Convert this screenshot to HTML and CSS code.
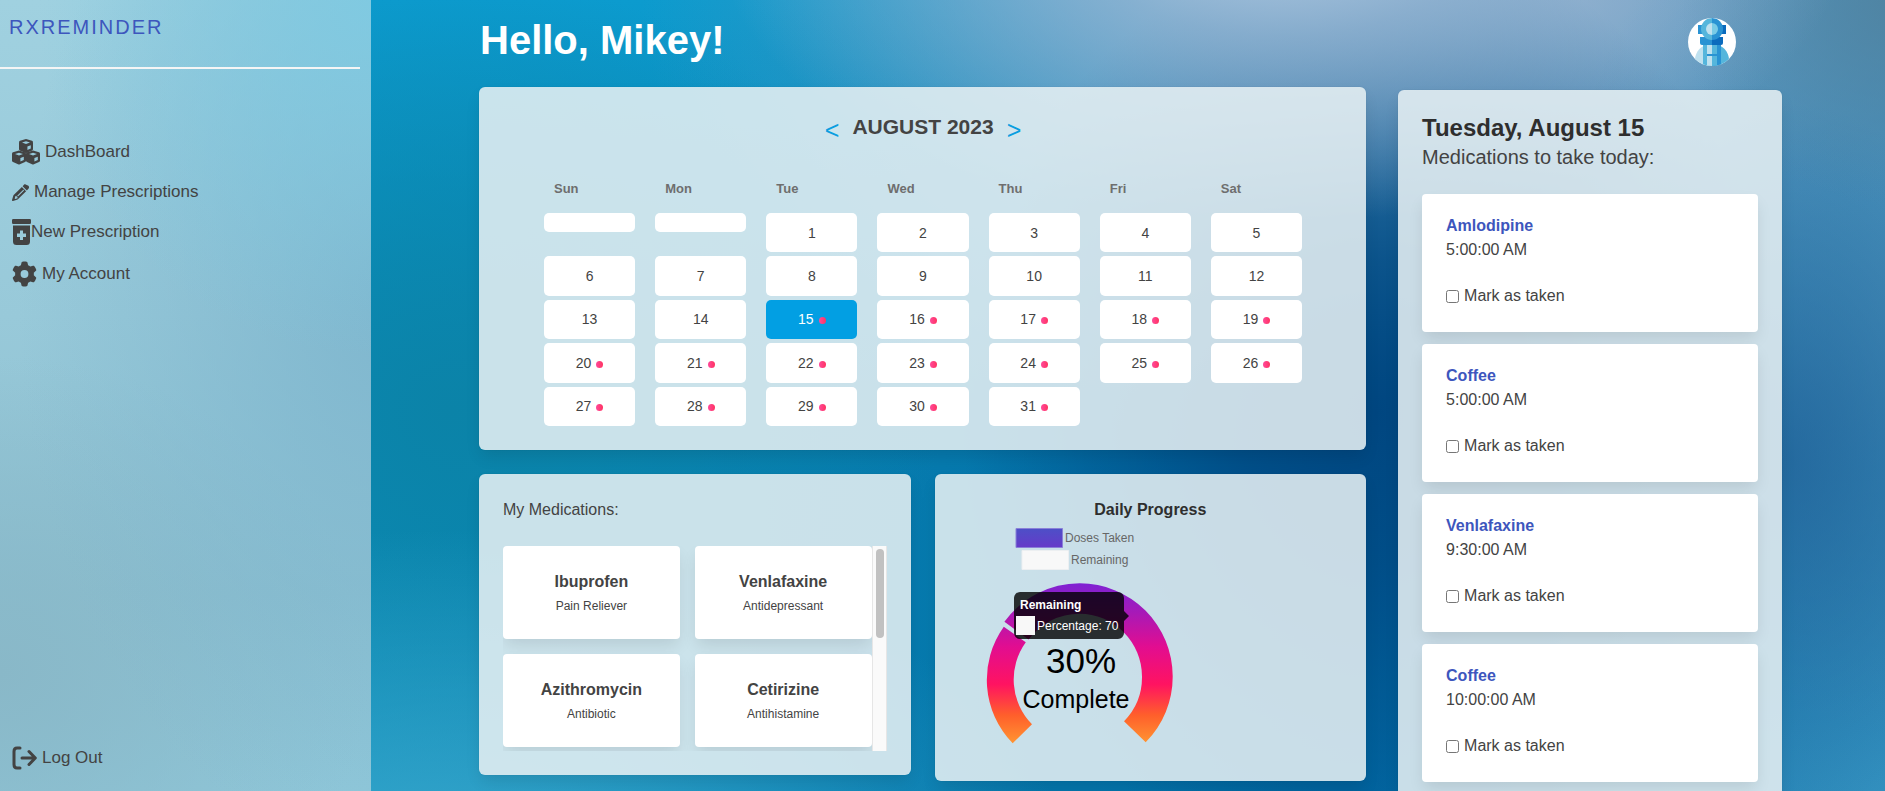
FILE: index.html
```html
<!DOCTYPE html>
<html lang="en">
<head>
<meta charset="utf-8">
<title>RxReminder</title>
<link rel="stylesheet" href="styles.css">
</head>
<body>
<div class="app">
  <aside class="sidebar">
    <a class="brand" href="#">RXREMINDER</a>
    <hr class="divider">
    <nav class="menu">
      <a class="menu-link gap-md" href="#">
        <svg width="28" height="26" viewBox="0 0 28 26" aria-hidden="true">
          <g id="cube"><path fill="#434343" d="M14 0 L20 1.8 Q21 2.2 21 3.4 V10 Q21 11 20 11.5 L14.9 13.8 Q14 14.2 13.1 13.8 L8 11.5 Q7 11 7 10 V3.4 Q7 2.2 8 1.8Z"/><path class="cube-face" d="M10 3.6 L14 2.2 18 3.6 14 5.1Z M15.4 7.6 L18.8 6.2 V9.4 L15.4 11Z"/></g>
          <use href="#cube" x="-7" y="11.5"/><use href="#cube" x="7" y="11.5"/>
        </svg>DashBoard</a>
      <a class="menu-link gap-md" href="#">
        <svg width="17" height="17" viewBox="0 0 512 512" aria-hidden="true"><path fill="#434343" d="M410 18c-12-12-32-12-44 0l-46 46 128 128 46-46c25-25 25-65 0-90zM297 87L58 326c-11 11-18 24-22 38L1 482c-3 8 0 17 6 23s15 8 23 6l118-35c14-4 27-12 38-22l239-239zM137 367h0l8 0v23c0 9 7 16 16 16h23c-3 11-9 22-19 26l-70 21-14-14 21-70c4-10 14-17 26-18l9 16zM354 201L186 369c-6 6-16 6-22 0s-6-16 0-22l168-168c6-6 16-6 22 0s6 16 0 22z" fill-rule="evenodd"/></svg>Manage Prescriptions</a>
      <a class="menu-link" href="#">
        <svg width="19" height="26" viewBox="0 0 19 26" aria-hidden="true"><path fill="#434343" fill-rule="evenodd" d="M1.3 0h16.4Q19 0 19 1.3v2.4Q19 5 17.7 5H1.3Q0 5 0 3.700V1.300Q0 0 1.300 0zM1 6.500h17V22.500Q18 26 14.500 26H4.500Q1 26 1 22.500zM8 11.500v3H5v3.500h3v3h3v-3h3v-3.500h-3v-3z"/></svg>New Prescription</a>
      <a class="menu-link gap-md" href="#">
        <svg width="25" height="28" viewBox="0 0 512 512" aria-hidden="true"><path fill="#434343" d="M495.900 166.600c3.200 8.700 .5 18.400-6.400 24.600l-43.300 39.400c1.100 8.300 1.700 16.800 1.700 25.400s-.6 17.100-1.700 25.400l43.300 39.400c6.900 6.200 9.600 15.900 6.400 24.600c-4.400 11.900-9.700 23.300-15.800 34.300l-4.700 8.100c-6.600 11-14 21.400-22.100 31.200c-5.900 7.200-15.700 9.600-24.500 6.800l-55.700-17.700c-13.400 10.300-28.200 18.900-44 25.400l-12.500 57.100c-2 9.100-9 16.300-18.200 17.800c-13.800 2.300-28 3.500-42.500 3.500s-28.700-1.200-42.500-3.500c-9.200-1.500-16.200-8.700-18.200-17.800l-12.500-57.100c-15.800-6.500-30.600-15.100-44-25.400L83.100 425.900c-8.800 2.800-18.600 .3-24.500-6.800c-8.100-9.800-15.500-20.200-22.100-31.200l-4.700-8.100c-6.100-11-11.400-22.400-15.800-34.300c-3.200-8.700-.5-18.400 6.400-24.600l43.300-39.400C64.600 273.100 64 264.600 64 256s.6-17.100 1.700-25.400L22.400 191.200c-6.900-6.200-9.600-15.900-6.400-24.600c4.400-11.900 9.700-23.300 15.800-34.300l4.700-8.100c6.600-11 14-21.400 22.100-31.200c5.900-7.200 15.700-9.600 24.500-6.800l55.700 17.700c13.400-10.300 28.200-18.900 44-25.400l12.500-57.100c2-9.100 9-16.300 18.200-17.800C227.300 1.200 241.500 0 256 0s28.700 1.200 42.500 3.500c9.200 1.500 16.200 8.700 18.200 17.800l12.500 57.100c15.800 6.500 30.600 15.100 44 25.400l55.700-17.700c8.800-2.800 18.600-.3 24.500 6.800c8.100 9.800 15.500 20.200 22.100 31.200l4.700 8.100c6.100 11 11.400 22.400 15.800 34.300zM256 336a80 80 0 1 0 0-160 80 80 0 1 0 0 160z"/></svg>My Account</a>
    </nav>
    <a class="menu-link gap-md logout" href="#">
      <svg width="25" height="24" viewBox="0 0 25 24" fill="none" stroke="#434343" stroke-width="3" stroke-linecap="round" stroke-linejoin="round" aria-hidden="true"><path d="M8 2H5Q2 2 2 5.500V18.500Q2 22 5 22H8M10 12H23M17 5.500L23.300 12 17 18.500"/></svg>Log Out</a>
  </aside>

  <main class="main">
    <header class="header">
      <h1 class="greeting">Hello, Mikey!</h1>
      <svg class="avatar" width="48" height="48" viewBox="0 0 48 48" role="img" aria-label="Profile">
        <clipPath id="round"><circle cx="24" cy="24" r="24"/></clipPath>
        <g clip-path="url(#round)">
          <path fill="#fff" d="M0 0h48v48H0z"/>
          <path fill="#bfe1ef" d="M24 26C13 26 7 34 7 42v6h17z"/><path fill="#55b6dc" d="M24 26c11 0 17 8 17 16v6H24z"/>
          <path fill="#2a93d3" d="M10 7h8v9h-8z"/><path fill="#0b6bbd" d="M30 7h8v9h-8z"/>
          <path fill="#55b6dc" d="M15 27h9v21h-9z"/><path fill="#2a93d3" d="M24 27h9v21h-9z"/>
          <path fill="#bfe1ef" d="M19 27h5v21h-5z"/><path fill="#55b6dc" d="M24 27h5v21h-5z"/>
          <path fill="#2a93d3" d="M19 36h10v2H19z"/>
          <path fill="#2a93d3" d="M12 19h12v8H14q-2 0-2-2z"/><path fill="#0b6bbd" d="M24 19h11v6q0 2-2 2h-9z"/>
          <path fill="#55b6dc" d="M24 0a11 11 0 0 0 0 22z"/><path fill="#2a93d3" d="M24 0a11 11 0 0 1 0 22z"/>
          <path fill="#bfe1ef" d="M24 5a6 6 0 0 0 0 12z"/><path fill="#79cbe6" d="M24 5a6 6 0 0 1 0 12z"/>
        </g>
      </svg>
    </header>

    <div class="board">
      <div class="left">
        <section class="card calendar">
          <div class="month">
            <button class="arrow" type="button" aria-label="Previous month">&lt;</button>
            <h2 class="month-name">AUGUST 2023</h2>
            <button class="arrow" type="button" aria-label="Next month">&gt;</button>
          </div>
          <table class="days">
            <thead><tr><th>Sun</th><th>Mon</th><th>Tue</th><th>Wed</th><th>Thu</th><th>Fri</th><th>Sat</th></tr></thead>
            <tbody>
              <tr><td class="blank"><div class="stub"></div></td><td class="blank"><div class="stub"></div></td><td>1</td><td>2</td><td>3</td><td>4</td><td>5</td></tr>
              <tr><td>6</td><td>7</td><td>8</td><td>9</td><td>10</td><td>11</td><td>12</td></tr>
              <tr><td>13</td><td>14</td><td class="today">15<i class="dot"></i></td><td>16<i class="dot"></i></td><td>17<i class="dot"></i></td><td>18<i class="dot"></i></td><td>19<i class="dot"></i></td></tr>
              <tr><td>20<i class="dot"></i></td><td>21<i class="dot"></i></td><td>22<i class="dot"></i></td><td>23<i class="dot"></i></td><td>24<i class="dot"></i></td><td>25<i class="dot"></i></td><td>26<i class="dot"></i></td></tr>
              <tr><td>27<i class="dot"></i></td><td>28<i class="dot"></i></td><td>29<i class="dot"></i></td><td>30<i class="dot"></i></td><td>31<i class="dot"></i></td></tr>
            </tbody>
          </table>
        </section>

        <div class="lower">
          <section class="card">
            <h2 class="card-title">My Medications:</h2>
            <div class="scroller">
              <ul class="meds">
                <li class="med"><strong>Ibuprofen</strong><span class="kind">Pain Reliever</span></li>
                <li class="med"><strong>Venlafaxine</strong><span class="kind">Antidepressant</span></li>
                <li class="med"><strong>Azithromycin</strong><span class="kind">Antibiotic</span></li>
                <li class="med"><strong>Cetirizine</strong><span class="kind">Antihistamine</span></li>
              </ul>
              <div class="track"><div class="thumb"></div></div>
            </div>
          </section>

          <section class="card progress">
            <h2 class="card-title progress-title">Daily Progress</h2>
            <svg class="chart" width="236" height="231" viewBox="959 526 236 231" role="img" aria-label="30% Complete">
              <defs>
                <linearGradient id="ring" gradientUnits="userSpaceOnUse" x1="0" y1="526" x2="0" y2="746">
                  <stop offset="0" stop-color="#4a52c7"/><stop offset=".1" stop-color="#663ac9"/><stop offset=".26" stop-color="#7f22d3"/><stop offset=".39" stop-color="#a61ab8"/><stop offset=".55" stop-color="#e20d90"/><stop offset=".72" stop-color="#ff1361"/><stop offset=".86" stop-color="#ff5f2b"/><stop offset="1" stop-color="#ff9a33"/>
                </linearGradient>
              </defs>
              <path fill="url(#ring)" stroke="#8a80d8" d="M1016 528.500h46.500v19H1016z"/>
              <path fill="#f8f8f8" stroke="#eceff1" d="M1022 550.500h46.500v19H1022z"/>
              <text class="legend" x="1065" y="542">Doses Taken</text>
              <text class="legend" x="1071" y="564">Remaining</text>
              <path fill="url(#ring)" d="M1012.700 743.300A91 91 0 0 1 1003.800 626.800L1025.800 642.300A63.500 63.500 0 0 0 1032 724.200Z"/>
              <path fill="url(#ring)" d="M1004.400 621.800A93 93 0 0 1 1079.700 583.300A93 93 0 0 1 1172.700 676.300A93 93 0 0 1 1145.700 742.300L1124 721.200A63 63 0 0 0 1142 676.500A63 63 0 0 0 1079.500 613.700A63 63 0 0 0 1028.600 639.500Z"/>
              <text class="percent" x="1081" y="673">30%</text>
              <text class="complete" x="1076" y="708">Complete</text>
              <path fill="#000" fill-opacity=".8" d="M1020 592h98a6 6 0 0 1 6 6v13l5 5-5 5v12a6 6 0 0 1-6 6h-98a6 6 0 0 1-6-6V598a6 6 0 0 1 6-6z"/>
              <text class="tip tip-title" x="1020" y="609">Remaining</text>
              <path fill="#f8f8f8" d="M1016 616h19v19h-19z"/>
              <text class="tip" x="1037" y="630">Percentage: 70</text>
            </svg>
          </section>
        </div>
      </div>

      <section class="card today-card">
        <h2 class="date">Tuesday, August 15</h2>
        <p class="subtitle">Medications to take today:</p>
        <ul class="doses">
          <li class="dose"><strong class="drug">Amlodipine</strong><span>5:00:00 AM</span><label class="mark"><input type="checkbox" class="tick">Mark as taken</label></li>
          <li class="dose"><strong class="drug">Coffee</strong><span>5:00:00 AM</span><label class="mark"><input type="checkbox" class="tick">Mark as taken</label></li>
          <li class="dose"><strong class="drug">Venlafaxine</strong><span>9:30:00 AM</span><label class="mark"><input type="checkbox" class="tick">Mark as taken</label></li>
          <li class="dose"><strong class="drug">Coffee</strong><span>10:00:00 AM</span><label class="mark"><input type="checkbox" class="tick">Mark as taken</label></li>
        </ul>
      </section>
    </div>
  </main>
</div>
</body>
</html>
```
FILE: styles.css
```css
* { box-sizing: border-box; margin: 0; padding: 0; }

body {
  font-family: "Liberation Sans", Helvetica, Arial, sans-serif;
  font-size: 16px;
  line-height: 24px;
  color: #434343;
}

ul { list-style: none; }
a { color: inherit; text-decoration: none; }

.app {
  display: flex;
  height: 100vh;
  overflow: hidden;
  background:
    radial-gradient(ellipse 30% 36% at 68% -8%, #b0c8e0 0%, rgba(160, 188, 216, .7) 35%, rgba(130, 165, 200, 0) 100%),
    radial-gradient(ellipse 12% 26% at 101% 0%, rgba(79, 130, 159, .9) 0%, rgba(79, 130, 159, 0) 100%),
    radial-gradient(ellipse 22% 60% at 73% 52%, #004680 0%, rgba(0, 70, 128, .8) 32%, rgba(0, 70, 128, 0) 100%),
    radial-gradient(ellipse 12% 45% at 95% 58%, rgba(34, 100, 154, .8) 0%, rgba(44, 110, 164, 0) 100%),
    radial-gradient(ellipse 20% 60% at 103% 34%, #468db8 0%, rgba(70, 141, 184, 0) 100%),
    radial-gradient(ellipse 22% 55% at 102% 106%, #3592c0 0%, rgba(53, 146, 192, 0) 100%),
    radial-gradient(ellipse 34% 45% at 23% 112%, #3aa8ce 0%, rgba(58, 168, 206, 0) 100%),
    radial-gradient(ellipse 26% 55% at 24% 52%, #0b83a8 0%, rgba(11, 131, 168, 0) 100%),
    radial-gradient(ellipse 50% 62% at 84% 0%, #7ba3c5 0%, rgba(91, 147, 187, .85) 40%, rgba(91, 147, 187, 0) 100%),
    linear-gradient(rgba(12, 155, 206, 1) 0%, rgba(12, 150, 200, 0) 50%),
    linear-gradient(90deg, #0a8cb8 20%, #0679ad 50%, #006ba6 72%, #1f7cb0 100%);
}

.sidebar {
  flex: 0 0 371px;
  display: flex;
  flex-direction: column;
  padding-bottom: 21px;
  background:
    radial-gradient(ellipse 90% 45% at 100% 0%, rgba(126, 202, 226, .9) 0%, rgba(128, 202, 226, 0) 100%),
    radial-gradient(ellipse 100% 70% at 105% 38%, rgba(126, 182, 206, .95) 0%, rgba(130, 186, 208, 0) 100%),
    radial-gradient(ellipse 100% 40% at 0% 85%, #89b8c8 0%, rgba(138, 183, 199, 0) 100%),
    linear-gradient(#a0d1e0 0%, #98c9d9 40%, #8cc0d1 75%, #8fc7d9 100%);
}

.brand {
  padding: 15px 9px;
  font-size: 20px;
  letter-spacing: 2px;
  color: #3d56bd;
}

.divider {
  width: 97%;
  height: 2px;
  margin-top: 13px;
  border: 0;
  background: #f5f5f5;
}

.menu {
  flex: 1;
  display: flex;
  flex-direction: column;
  gap: 15px;
  padding: 70px 12px 0;
}

.menu-link { display: flex; align-items: center; font-size: 17px; }
.gap-md { gap: 5px; }
.cube-face { fill: #97cadb; }
.logout { padding: 0 12px; }

.main { flex: 1; padding: 0 103px 0 108px; }

.header {
  display: flex;
  justify-content: space-between;
  height: 87px;
  padding: 18px 46px 0 1px;
}

.greeting {
  font-size: 40px;
  line-height: 44px;
  color: #fff;
}

.board {
  display: grid;
  grid-template-columns: 67fr 29fr;
  gap: 32px;
  align-items: start;
}

.left { display: flex; flex-direction: column; gap: 24px; }

.card {
  padding: 24px;
  border-radius: 6px;
  background: rgba(229, 239, 243, .88);
  box-shadow: 0 8px 16px -2px rgba(10, 10, 10, .1), 0 0 0 1px rgba(10, 10, 10, .02);
}

.calendar { padding: 24px 44px 20px 45px; }

.month {
  display: flex;
  align-items: center;
  justify-content: center;
  gap: 13px;
  height: 32px;
}

.month-name { font-size: 21px; }

.arrow {
  padding-top: 6px;
  border: 0;
  background: none;
  font: 25px "Liberation Sans", Helvetica, Arial, sans-serif;
  color: #0a9ee0;
}

.days {
  width: 100%;
  height: 267px;
  margin-top: 20px;
  border-collapse: separate;
  border-spacing: 20px 4px;
  table-layout: fixed;
  font-size: 14px;
  line-height: 20px;
  text-align: center;
}

.days th {
  height: 42px;
  padding: 2px 10px 0;
  font-size: 13px;
  text-align: left;
  color: #6e6e6e;
}

.days td { border-radius: 5px; background: #fff; }
.days .today { background: #029fe3; color: #fff; }
.days .blank { background: none; vertical-align: top; }
.stub { height: 19px; border-radius: 5px; background: #fff; }

.dot {
  display: inline-block;
  width: 7px;
  height: 7px;
  margin-left: 5px;
  border-radius: 50%;
  background: linear-gradient(90deg, #ff4a9c, #ff3360);
}

.lower {
  display: grid;
  grid-template-columns: 1fr 1fr;
  gap: 24px;
  align-items: start;
}

.card-title { font-size: 16px; font-weight: 400; }

.scroller {
  display: flex;
  height: 205px;
  margin-top: 24px;
  overflow: hidden;
}

.meds {
  flex: 1;
  display: grid;
  grid-template-columns: 1fr 1fr;
  gap: 15px;
  align-content: start;
}

.med {
  display: flex;
  flex-direction: column;
  gap: 3px;
  padding: 24px 0;
  height: 93px;
  border-radius: 4px;
  background: #fff;
  text-align: center;
  box-shadow: 0 8px 16px -2px rgba(10, 10, 10, .1);
}

.kind { font-size: 12px; line-height: 18px; }

.track {
  width: 15px;
  padding: 3px;
  border: solid #e6e6e6;
  border-width: 0 1px;
  background: #fafafa;
}

.thumb { width: 8px; height: 89px; border-radius: 4px; background: #c1c1c1; }

.progress-title { font-weight: 700; text-align: center; color: #2e2e2e; }
.chart { display: block; margin-top: 4px; }

.legend { font-size: 12px; fill: #666; }
.percent { font-size: 35px; text-anchor: middle; fill: #000; }
.complete { font-size: 25px; text-anchor: middle; fill: #000; }
.tip { font-size: 12px; fill: #fff; }
.tip-title { font-weight: 700; }

.today-card { margin-top: 3px; }
.date { font-size: 24px; line-height: 27px; color: #2e2e2e; }
.subtitle { margin-top: 3px; font-size: 20px; line-height: 26px; }
.doses { display: flex; flex-direction: column; gap: 12px; margin-top: 24px; }

.dose {
  display: flex;
  flex-direction: column;
  padding: 20px 24px 24px;
  border-radius: 4px;
  background: #fff;
  box-shadow: 0 8px 16px -2px rgba(10, 10, 10, .1);
}

.drug { color: #3d56bd; }
.mark { display: flex; align-items: center; gap: 5px; margin-top: 22px; }

.tick {
  width: 13px;
  height: 13px;
}
```
